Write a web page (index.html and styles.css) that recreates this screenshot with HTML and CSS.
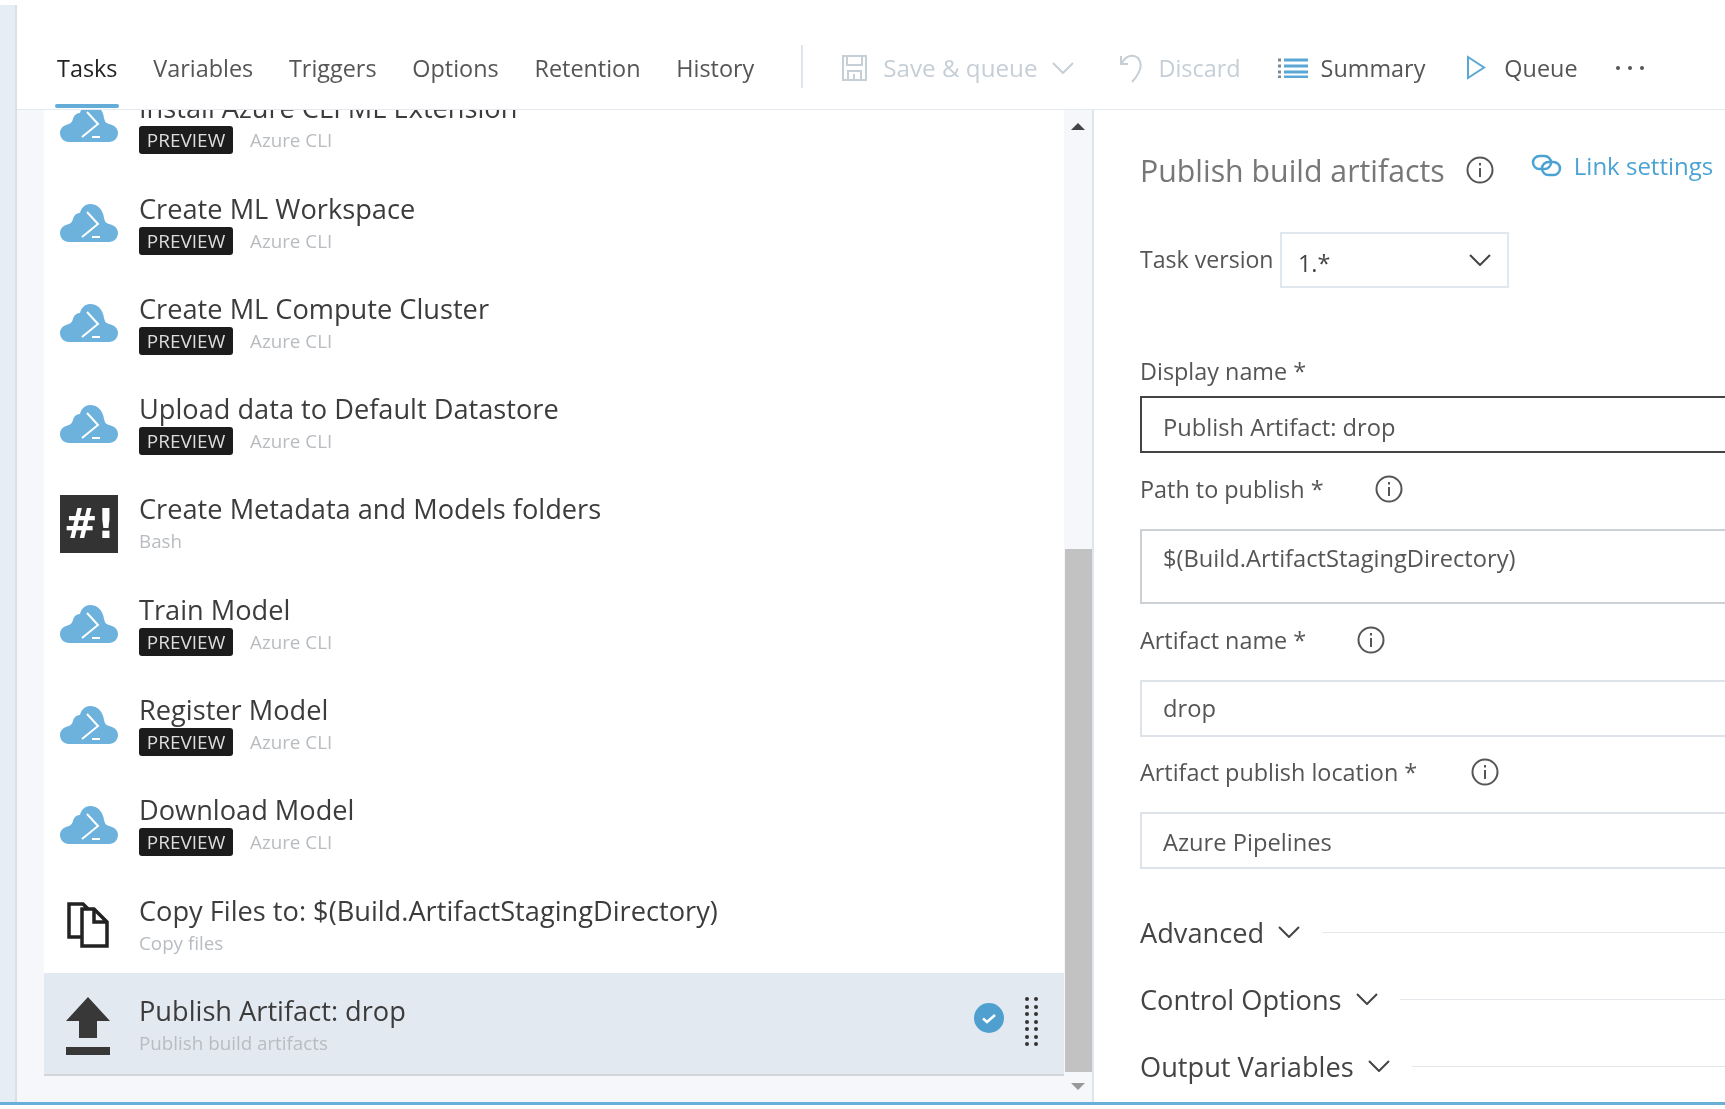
FILE: index.html
```html
<!DOCTYPE html>
<html lang="en">
<head>
    <meta charset="UTF-8">
    <meta name="viewport" content="width=device-width, initial-scale=1.0">
    <title>Publish build artifacts</title>
    <link rel="stylesheet" href="styles.css">
</head>
<body>
    <svg class="icon-defs" width="0" height="0">
        <defs>
            <symbol id="cloud" viewBox="0 0 58 38">
                <path fill="#6cb2dc" d="M9 38C4 38 0 34 0 29C0 24 4 21 9 20C11 19 12 18 13 15C14 11 17 9 20 9C21 4 25 0 30 0C38 0 43 6 44 14C45 18 46 19 49 20C54 21 58 24 58 29C58 34 54 38 49 38Z"/>
                <path fill="none" stroke="#fff" stroke-width="2" d="M27 8L38 20L22 33"/>
                <path fill="none" stroke="#fff" stroke-width="2" d="M32 33H40"/>
            </symbol>
            <symbol id="info" viewBox="0 0 28 28">
                <circle cx="14" cy="14" r="12.500" fill="none" stroke="#555" stroke-width="2"/>
                <path fill="none" stroke="#555" stroke-width="2" d="M14 12V21M14 7V9.500"/>
            </symbol>
            <symbol id="chevron" viewBox="0 0 22 12">
                <path fill="none" stroke="currentColor" stroke-width="2" d="M1 1L11 11L21 1"/>
            </symbol>
        </defs>
    </svg>

    <div class="page">
        <div class="workspace">
            <div class="rail"></div>
            <div class="main">
                <div class="toolbar">
                    <nav class="tabs">
                        <span class="tab tab-active">Tasks</span>
                        <span class="tab">Variables</span>
                        <span class="tab">Triggers</span>
                        <span class="tab">Options</span>
                        <span class="tab">Retention</span>
                        <span class="tab">History</span>
                    </nav>
                    <div class="toolbar-sep"></div>
                    <div class="action action-disabled action-save">
                        <svg width="27" height="28" viewBox="0 0 27 28" fill="none" stroke="#c6ced6" stroke-width="2"><path d="M2 2H25V26H2Z"/><path d="M6 2V11H21V2M7 26V17H20V26M13 20V26"/></svg>
                        <span>Save &amp; queue</span>
                        <svg class="action-chevron" width="22" height="12"><use href="#chevron"/></svg>
                    </div>
                    <div class="action action-disabled action-discard">
                        <svg width="24" height="30" viewBox="0 0 24 30" fill="none" stroke="#c6ced6" stroke-width="2"><path d="M2 3V11H9"/><path d="M3 10C7 2 15 1 19 5C24 11 22 19 13 29"/></svg>
                        <span>Discard</span>
                    </div>
                    <div class="action action-summary">
                        <svg width="30" height="20" viewBox="0 0 30 20"><path stroke="#5aa7d6" stroke-width="3" d="M6 2H30M6 8H30M6 14H30M6 19H30"/><path stroke="#7a8a96" stroke-width="3" d="M0 2H3M0 8H3M0 14H3M0 19H3"/></svg>
                        <span>Summary</span>
                    </div>
                    <div class="action action-queue">
                        <svg width="20" height="25" viewBox="0 0 20 25" fill="none" stroke="#5aa7d6" stroke-width="2"><path d="M2 2L18 12.500L2 23Z"/></svg>
                        <span>Queue</span>
                    </div>
                    <div class="more"><i></i><i></i><i></i></div>
                </div>

                <div class="content">
                    <div class="task-pane">
                        <div class="task-list">
                            <div class="task">
                                <svg class="task-icon"><use href="#cloud"/></svg>
                                <div class="task-text">
                                    <div class="task-name">Install Azure CLI ML Extension</div>
                                    <div class="task-meta"><span class="badge">PREVIEW</span><span class="task-type">Azure CLI</span></div>
                                </div>
                            </div>
                            <div class="task">
                                <svg class="task-icon"><use href="#cloud"/></svg>
                                <div class="task-text">
                                    <div class="task-name">Create ML Workspace</div>
                                    <div class="task-meta"><span class="badge">PREVIEW</span><span class="task-type">Azure CLI</span></div>
                                </div>
                            </div>
                            <div class="task">
                                <svg class="task-icon"><use href="#cloud"/></svg>
                                <div class="task-text">
                                    <div class="task-name">Create ML Compute Cluster</div>
                                    <div class="task-meta"><span class="badge">PREVIEW</span><span class="task-type">Azure CLI</span></div>
                                </div>
                            </div>
                            <div class="task">
                                <svg class="task-icon"><use href="#cloud"/></svg>
                                <div class="task-text">
                                    <div class="task-name">Upload data to Default Datastore</div>
                                    <div class="task-meta"><span class="badge">PREVIEW</span><span class="task-type">Azure CLI</span></div>
                                </div>
                            </div>
                            <div class="task">
                                <div class="bash-icon">#!</div>
                                <div class="task-text">
                                    <div class="task-name">Create Metadata and Models folders</div>
                                    <div class="task-meta"><span class="task-plain">Bash</span></div>
                                </div>
                            </div>
                            <div class="task">
                                <svg class="task-icon"><use href="#cloud"/></svg>
                                <div class="task-text">
                                    <div class="task-name">Train Model</div>
                                    <div class="task-meta"><span class="badge">PREVIEW</span><span class="task-type">Azure CLI</span></div>
                                </div>
                            </div>
                            <div class="task">
                                <svg class="task-icon"><use href="#cloud"/></svg>
                                <div class="task-text">
                                    <div class="task-name">Register Model</div>
                                    <div class="task-meta"><span class="badge">PREVIEW</span><span class="task-type">Azure CLI</span></div>
                                </div>
                            </div>
                            <div class="task">
                                <svg class="task-icon"><use href="#cloud"/></svg>
                                <div class="task-text">
                                    <div class="task-name">Download Model</div>
                                    <div class="task-meta"><span class="badge">PREVIEW</span><span class="task-type">Azure CLI</span></div>
                                </div>
                            </div>
                            <div class="task">
                                <svg class="task-icon task-icon-copy" viewBox="0 0 58 46" fill="none" stroke="#222" stroke-width="3.500"><path d="M23 35H10V2H24L29 7"/><path d="M23 7H35L48 20V44H23Z" fill="#fff"/><path d="M35 7V20H48"/></svg>
                                <div class="task-text">
                                    <div class="task-name">Copy Files to: $(Build.ArtifactStagingDirectory)</div>
                                    <div class="task-meta"><span class="task-plain">Copy files</span></div>
                                </div>
                            </div>
                            <div class="task task-selected">
                                <svg class="task-icon task-icon-tall" viewBox="0 0 58 58" fill="#383838"><path d="M29 0L51 24H38V41H20V24H7Z"/><path d="M7 50H51V58H7Z"/></svg>
                                <div class="task-text">
                                    <div class="task-name">Publish Artifact: drop</div>
                                    <div class="task-meta"><span class="task-plain">Publish build artifacts</span></div>
                                </div>
                                <svg class="task-check" width="30" height="30" viewBox="0 0 30 30"><circle cx="15" cy="15" r="15" fill="#4f9fcf"/><path fill="none" stroke="#fff" stroke-width="2.500" d="M9 15.500L13 19L21 12"/></svg>
                                <div class="gripper">
                                    <i></i><i></i><i></i><i></i><i></i><i></i><i></i><i></i><i></i><i></i><i></i><i></i><i></i><i></i>
                                </div>
                            </div>
                        </div>
                        <div class="scrollbar">
                            <div class="scroll-up"></div>
                            <div class="scroll-thumb"></div>
                            <div class="scroll-down"></div>
                        </div>
                    </div>

                    <div class="detail">
                        <div class="detail-head">
                            <h2 class="detail-title">Publish build artifacts</h2>
                            <svg class="info info-head"><use href="#info"/></svg>
                            <div class="link-settings">
                                <svg width="31" height="23" viewBox="0 0 31 23" fill="none" stroke="#4ba3d4" stroke-width="2.500"><rect x="2" y="2" width="18" height="13" rx="6.500"/><rect x="11" y="8" width="18" height="13" rx="6.500"/></svg>
                                <span>Link settings</span>
                            </div>
                        </div>
                        <div class="version-row">
                            <label class="version-label">Task version</label>
                            <div class="version-select">
                                <span class="version-value">1.*</span>
                                <svg width="22" height="12"><use href="#chevron"/></svg>
                            </div>
                        </div>

                        <div class="field-label field-label-first">Display name *</div>
                        <div class="input input-focus">Publish Artifact: drop</div>

                        <div class="field-label field-label-path">Path to publish *<svg class="info info-path"><use href="#info"/></svg></div>
                        <div class="input input-tall">$(Build.ArtifactStagingDirectory)</div>

                        <div class="field-label field-label-name">Artifact name *<svg class="info info-name"><use href="#info"/></svg></div>
                        <div class="input">drop</div>

                        <div class="field-label field-label-location">Artifact publish location *<svg class="info info-location"><use href="#info"/></svg></div>
                        <div class="input input-location">Azure Pipelines</div>

                        <div class="section section-first"><span>Advanced</span><svg width="22" height="12"><use href="#chevron"/></svg><i></i></div>
                        <div class="section"><span>Control Options</span><svg width="22" height="12"><use href="#chevron"/></svg><i></i></div>
                        <div class="section"><span>Output Variables</span><svg width="22" height="12"><use href="#chevron"/></svg><i></i></div>
                    </div>
                </div>
            </div>
        </div>
        <div class="status-line"></div>
    </div>
</body>
</html>
```

FILE: styles.css
```css
html, body {
    margin: 0;
    height: 100%;
    background: #fff;
}
body {
    font-family: "Open Sans", "Noto Sans", sans-serif;
    color: #333;
    overflow: hidden;
}
.icon-defs {
    display: block;
    height: 0;
}
.page {
    display: flex;
    flex-direction: column;
    height: 1109px;
    filter: blur(0.45px); /* the source capture is soft */
}
.workspace {
    display: flex;
    height: 1102px;
}
.rail {
    flex: none;
    width: 15px;
    margin-top: 5px;
    background: #e7edf4;
    border-right: 2px solid #d9e0e7;
}
.main {
    flex: 1;
    min-width: 0;
    display: flex;
    flex-direction: column;
}
.status-line {
    height: 3px;
    background: #69b0d8;
}

/* toolbar */
.toolbar {
    flex: none;
    height: 110px;
    box-sizing: border-box;
    display: flex;
    align-items: center;
    padding: 36px 0 10px 40px;
    border-bottom: 1px solid #e3e9ef;
    font-size: 23.4px;
    color: #555;
    white-space: nowrap;
}
.tabs {
    display: flex;
    gap: 35.8px;
}
.tab {
    position: relative;
    line-height: 34px;
    font-size: 23.4px;
}
.tab-active {
    color: #222;
}
.tab-active::after {
    content: "";
    position: absolute;
    left: -2px;
    right: -2px;
    top: 53px;
    height: 4px;
    background: #63add8;
    border-radius: 2px;
}
.toolbar-sep {
    width: 2px;
    height: 43px;
    margin: -3px 0 0 47px;
    background: #dfe5ea;
}
.action {
    display: flex;
    align-items: center;
    gap: 15px;
}
.action-disabled {
    color: #c6ced6;
}
.action-save {
    margin-left: 38px;
    font-size: 24.2px;
}
.action-discard {
    margin-left: 45px;
}
.action-summary {
    margin-left: 37px;
    gap: 13px;
}
.action-queue {
    margin-left: 41px;
    gap: 18px;
}
.more {
    display: flex;
    gap: 8px;
    margin-left: 38px;
}
.more i {
    width: 4px;
    height: 4px;
    border-radius: 50%;
    background: #555;
}

/* left list */
.content {
    flex: 1;
    min-height: 0;
    display: flex;
}
.task-pane {
    flex: none;
    width: 1077px;
    box-sizing: border-box;
    padding-left: 27px;
    display: flex;
    background: #f5f7fa;
    border-right: 2px solid #dfe5ec;
}
.task-list {
    flex: none;
    width: 1020px;
    height: 978px;
    overflow: hidden;
}
.task {
    display: flex;
    align-items: center;
    height: 100.33px;
    box-sizing: border-box;
    padding: 18.4px 26px 14px 16px;
    background: #fff;
}
.task:first-child {
    margin-top: -39.7px;
}
.task-selected {
    height: 103px;
    padding-top: 20.4px;
    padding-bottom: 16.7px;
    background: #e3e9f1;
    border-bottom: 2px solid #d3d6da;
}
.task-icon {
    flex: none;
    width: 58px;
    height: 38px;
    margin: 0 21px 0 0;
}
.task-icon-copy {
    height: 46px;
    margin-left: -1px;
    margin-right: 22px;
}
.task-icon-tall {
    height: 58px;
    margin-left: -1px;
    margin-right: 22px;
}
.bash-icon {
    flex: none;
    width: 58px;
    height: 58px;
    margin-right: 21px;
    background: #333;
    color: #fff;
    font-family: "DejaVu Sans", sans-serif;
    font-weight: 700;
    font-size: 40px;
    line-height: 58px;
    text-align: center;
    letter-spacing: -1px;
}
.task-text {
    flex: 1;
    min-width: 0;
}
.task-name {
    font-size: 27.2px;
    line-height: 34px;
    color: #3c3c3c;
    white-space: nowrap;
}
.task-meta {
    display: flex;
    align-items: center;
    height: 28px;
    margin-top: 1px;
}
.badge {
    width: 94px;
    height: 28px;
    line-height: 28px;
    border-radius: 3px;
    background: #1c1c1c;
    color: #ddd;
    font-size: 19px;
    text-align: center;
}
.task-type {
    margin-left: 17px;
    font-size: 18.8px;
    color: #b8bcc0;
}
.task-plain {
    font-size: 18.8px;
    color: #b8bcc0;
}
.task-check {
    flex: none;
    margin: 0 21px 16px 0;
}
.gripper {
    flex: none;
    width: 13px;
    margin-bottom: 8px;
    display: grid;
    grid-template-columns: 4px 4px;
    column-gap: 5px;
    row-gap: 3.5px;
}
.gripper i {
    width: 4px;
    height: 4px;
    background: #333;
    border-radius: 50%;
}

/* scrollbar */
.scrollbar {
    flex: none;
    width: 28px;
    display: flex;
    flex-direction: column;
    align-items: center;
}
.scroll-up {
    width: 0;
    height: 0;
    margin: 13px 0 0;
    border-left: 7px solid transparent;
    border-right: 7px solid transparent;
    border-bottom: 7px solid #444;
}
.scroll-thumb {
    width: 27px;
    height: 523px;
    margin-top: 419px;
    background: #c2c2c2;
}
.scroll-down {
    width: 0;
    height: 0;
    margin-top: 11px;
    border-left: 7px solid transparent;
    border-right: 7px solid transparent;
    border-top: 7px solid #999;
}

/* right side */
.detail {
    flex: 1;
    min-width: 0;
    overflow: hidden;
    padding-left: 46px;
    box-sizing: border-box;
    color: #555;
    font-size: 23.4px;
}
.detail-head {
    display: flex;
    align-items: center;
    height: 44px;
    margin-top: 38px;
}
.detail-title {
    margin: 0;
    font-size: 30.3px;
    font-weight: 400;
    color: #777;
    white-space: nowrap;
}
.info {
    flex: none;
    width: 28px;
    height: 28px;
}
.info-head {
    margin-left: 21px;
}
.link-settings {
    display: flex;
    align-items: center;
    gap: 12px;
    margin: -10px 0 0 37px;
    color: #4ba3d4;
    font-size: 24px;
    white-space: nowrap;
}
.version-row {
    display: flex;
    align-items: center;
    margin-top: 40px;
}
.version-label {
    width: 140px;
    padding-bottom: 2px;
    font-size: 23.1px;
    white-space: nowrap;
}
.version-select {
    width: 229px;
    height: 56px;
    box-sizing: border-box;
    display: flex;
    align-items: center;
    justify-content: space-between;
    padding: 0 16px;
    border: 2px solid #e1e7ee;
    color: #444;
}
.version-value {
    padding-top: 5px;
}
.field-label {
    display: flex;
    align-items: center;
    height: 32px;
    white-space: nowrap;
}
.field-label-first {
    margin-top: 67px;
    margin-bottom: 9px;
}
.field-label-path {
    margin-top: 20px;
    margin-bottom: 24px;
}
.field-label-name {
    margin-top: 20px;
    margin-bottom: 24px;
}
.field-label-location {
    margin-top: 19px;
    margin-bottom: 24px;
}
.info-path {
    margin-left: 51px;
}
.info-name {
    margin-left: 51px;
}
.info-location {
    margin-left: 54px;
}
.input {
    height: 57px;
    box-sizing: border-box;
    margin-right: -10px;
    padding: 0 21px;
    border: 2px solid #dde3e9;
    font-size: 23.7px;
    line-height: 53px;
    color: #555;
}
.input-focus {
    border-color: #444;
    line-height: 58px;
}
.input-tall {
    height: 75px;
    line-height: 55px;
    border-color: #ccd1d6;
}
.input-location {
    line-height: 56px;
}
.section {
    display: flex;
    align-items: center;
    height: 40px;
    margin-top: 27px;
    font-size: 27.2px;
    color: #444;
    white-space: nowrap;
}
.section-first {
    margin-top: 43px;
}
.section svg {
    flex: none;
    margin-left: 14px;
}
.section i {
    flex: 1;
    height: 1px;
    margin-left: 22px;
    background: #e3e7ec;
}
```
